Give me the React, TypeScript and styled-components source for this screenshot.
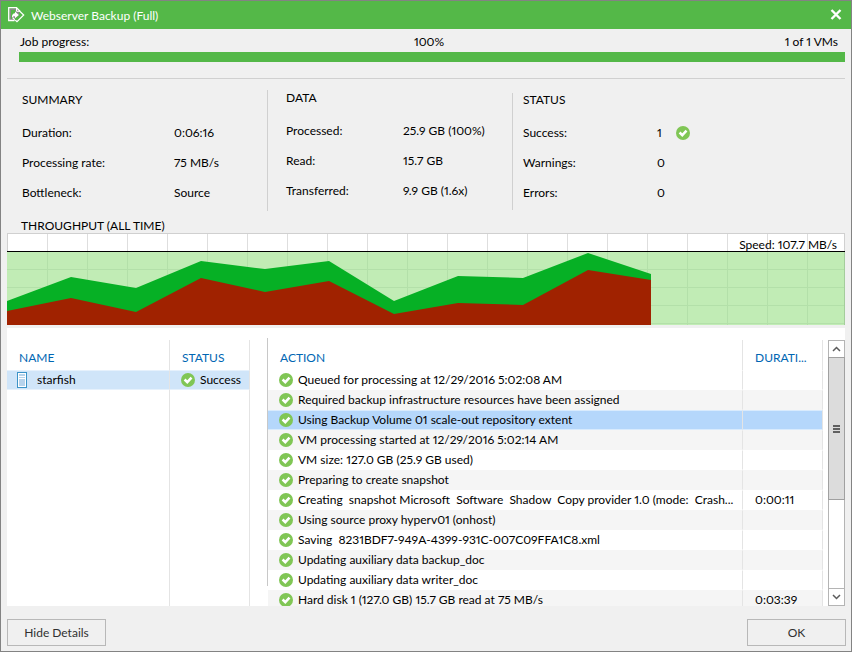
import React from "react";
import styled, { createGlobalStyle } from "styled-components";

const GlobalStyle = createGlobalStyle`
  *, *::before, *::after { box-sizing: border-box; }
  body { margin: 0; background: #f0f0f0; }
  body, button, table {
    font-family: Lato, "Open Sans", sans-serif;
    font-size: 12px;
    font-variant-numeric: proportional-nums;
    color: #000;
  }
  button { padding: 0; margin: 0; }
`;

const Dialog = styled.main`
  display: flex;
  flex-direction: column;
  height: 100vh;
  border: 1px solid #838383;
  background: #f0f0f0;
`;

const TitleBar = styled.header`
  display: flex;
  align-items: center;
  flex: none;
  height: 28px;
  padding: 0 7px 0 7px;
  background: #54b848;
  color: #fff;
`;

const Title = styled.h1`
  flex: 1;
  margin: 0 0 0 6px;
  font-size: 12px;
  font-weight: 400;
`;

const CloseButton = styled.button`
  display: flex;
  align-items: center;
  justify-content: center;
  width: 16px;
  height: 16px;
  border: 0;
  background: none;
`;

const Content = styled.div`
  display: flex;
  flex-direction: column;
  flex: 1;
  min-height: 0;
  padding: 0 6px;
`;

const ProgressLabels = styled.div`
  display: grid;
  grid-template-columns: 1fr auto 1fr;
  padding: 5px 7px 2px 13px;
  line-height: 16px;
`;

const EndLabel = styled.span`
  text-align: right;
`;

const ProgressTrack = styled.div`
  flex: none;
  height: 10px;
  margin-left: 12px;
  background: #d9d9d9;
`;

const ProgressFill = styled.div`
  height: 100%;
  background: #54b848;
`;

const Stats = styled.div`
  display: grid;
  grid-template-columns: 260fr 245fr 333fr;
  align-items: start;
  flex: none;
  margin-top: 16px;
  border-top: 1px solid #d0d0d0;
`;

const StatSection = styled.section<{ $divided?: boolean; $raised?: boolean }>`
  margin-top: ${(p) => (p.$raised ? 11 : 14)}px;
  padding: ${(p) => (p.$raised ? "1px 0 5px 18px" : p.$divided ? "0 0 2px 10px" : "0 0 2px 15px")};
  border-left: ${(p) => (p.$divided ? "1px solid #d0d0d0" : "0")};
`;

const Heading = styled.h2`
  margin: 0;
  font-size: 12px;
  font-weight: 400;
  line-height: 14px;
`;

const StatList = styled.dl`
  margin: 11px 0 0;
`;

const StatRow = styled.div<{ $label: number }>`
  display: grid;
  grid-template-columns: ${(p) => p.$label}px 1fr;
  line-height: 30px;
  dt, dd { margin: 0; }
`;

const StatValue = styled.dd<{ $count?: boolean }>`
  display: flex;
  align-items: center;
  gap: 14px;
  padding-left: ${(p) => (p.$count ? 1 : 0)}px;
`;

const ThroughputTitle = styled(Heading)`
  margin: 8px 0 0 14px;
`;

const ChartFrame = styled.div`
  position: relative;
  flex: none;
  height: 92px;
  svg { display: block; width: 100%; height: 100%; }
`;

const Speed = styled.span`
  position: absolute;
  top: 4px;
  right: 8px;
  line-height: 16px;
`;

const Panel = styled.div`
  display: flex;
  flex: 1;
  min-height: 0;
  margin-top: 3px;
  background: #fff;
`;

const VmPane = styled.div`
  display: flex;
  flex: none;
  width: 243px;
  padding-top: 12px;
`;

const Splitter = styled.div`
  flex: none;
  width: 1px;
  margin: 10px 0 20px 17px;
  background: #c8c8c8;
`;

const ActionPane = styled.div`
  flex: 1;
  min-width: 0;
  padding-top: 12px;
  overflow: hidden;
`;

const Table = styled.table`
  width: 100%;
  table-layout: fixed;
  border-collapse: separate;
  border-spacing: 0;
`;

const VmTable = styled(Table)`
  height: 100%;
`;

const Col = styled.col<{ $w?: number }>`
  width: ${(p) => (p.$w ? p.$w + "px" : "auto")};
`;

const HeadCell = styled.th`
  height: 30px;
  padding: 4px 12px 0;
  border-right: 1px solid #e4e4e4;
  color: #0066b3;
  font-weight: 400;
  text-align: left;
  white-space: nowrap;
  overflow: hidden;
  text-overflow: ellipsis;
`;

type Tone = "plain" | "alt" | "selected" | "current";
const fills: Record<Tone, string> = {
  plain: "#ffffff",
  alt: "#f5f5f5",
  selected: "#b5d7fb",
  current: "#d0e5f9",
};
const edges: Record<Tone, string> = {
  plain: "#ffffff",
  alt: "#f5f5f5",
  selected: "#d9ebfd",
  current: "#e6f1fc",
};

const Row = styled.tr<{ $tone: Tone }>`
  td {
    height: 20px;
    background: ${(p) => fills[p.$tone]};
    border-top: 1px solid ${(p) => edges[p.$tone]};
    border-bottom: 1px solid ${(p) => edges[p.$tone]};
  }
`;

const Cell = styled.td<{ $pad?: number }>`
  padding: 0 0 0 ${(p) => p.$pad ?? 12}px;
  border-right: 1px solid #e4e4e4;
  line-height: 18px;
  white-space: pre;
  overflow: hidden;
`;

const FillerCell = styled.td`
  border-right: 1px solid #e4e4e4;
`;

const IconLabel = styled.span<{ $gap: number }>`
  display: flex;
  align-items: center;
  gap: ${(p) => p.$gap}px;
  svg { flex: none; }
`;

const Scrollbar = styled.div`
  display: flex;
  flex-direction: column;
  flex: none;
  width: 17px;
  margin: 12px 0 0 5px;
  border: 1px solid #b4b4b4;
`;

const ScrollButton = styled.button`
  display: flex;
  align-items: center;
  justify-content: center;
  flex: none;
  height: 16px;
  border: 0;
  background: #fff;
`;

const ScrollTrack = styled.div`
  flex: 1;
  border-bottom: 1px solid #b4b4b4;
`;

const ScrollThumb = styled.div`
  display: flex;
  align-items: center;
  justify-content: center;
  height: 62%;
  margin: 0 -1px;
  border: 1px solid #a0a0a0;
  background: #dcdcdc;
`;

const Footer = styled.footer`
  display: flex;
  justify-content: space-between;
  flex: none;
  padding: 13px 5px 5px 6px;
`;

const DialogButton = styled.button`
  width: 99px;
  height: 27px;
  border: 1px solid #b8b8b8;
  background: #f0f0f0;
  color: #303030;
`;

const SuccessIcon = () => (
  <svg width="14" height="14" viewBox="0 0 14 14" aria-hidden="true">
    <circle cx="7" cy="7" r="7" fill="#80c655" />
    <path d="M3.6 6.5 6.3 9.2 10.5 4.6" fill="none" stroke="#fff" strokeWidth="2.5" />
  </svg>
);

const JobIcon = () => (
  <svg width="17" height="16" viewBox="0 0 17 16" fill="none" aria-hidden="true">
    <path d="M1.5 1.5H8.5L11 4V9L7 13.5H1.5Z" fill="#8a8a8a" />
    <path d="M3 3H7.5V5.5L4 8.5V12H3Z" fill="#54b848" />
    <path d="M6.5 13.5H.7V.7H8.5L12 4.2" stroke="#fff" strokeWidth="1.3" />
    <path d="M8.5 1V4.3H11.8" stroke="#fff" />
    <path d="M11.5 4 15.7 8 9 14.7 4.8 10.8" stroke="#fff" strokeWidth="1.2" />
    <path d="M7 12.5 13 7.8" stroke="#54b848" strokeWidth="1.6" />
    <path d="M4 11C3.6 8 5 6.2 7 6.2V4.5L10.8 8 7 11.3V9.4C5.6 9.2 4.6 9.8 4 11Z" fill="#fff" />
  </svg>
);

const CloseIcon = () => (
  <svg width="12" height="12" viewBox="0 0 12 12" aria-hidden="true">
    <path d="M1.5 1 10.5 10M10.5 1 1.5 10" stroke="#fff" strokeWidth="2.4" />
  </svg>
);

const VmIcon = () => (
  <svg width="10" height="16" viewBox="0 0 10 16" aria-hidden="true">
    <rect x=".5" y=".5" width="9" height="15" fill="#fff" stroke="#3c93c8" />
    <path d="M2 2H8V4H2ZM2 5H8V6H2ZM2 7H8V14H2Z" fill="#b7d3ec" />
  </svg>
);

const Chevron = ({ up }: { up?: boolean }) => (
  <svg width="9" height="6" viewBox="0 0 9 6" fill="none" aria-hidden="true">
    <path d={up ? "M1 5 4.5 1.5 8 5" : "M1 1 4.5 4.5 8 1"} stroke="#5c5c5c" strokeWidth="1.5" />
  </svg>
);

const Grip = () => (
  <svg width="8" height="8" viewBox="0 0 8 8" aria-hidden="true">
    <path d="M0 0H7V2H0ZM0 3H7V5H0ZM0 6H7V8H0Z" fill="#606060" />
  </svg>
);

const gridX = Array.from({ length: 20 }, (_, i) => 40.5 + i * 40);
const readLine = "0,68 64,44 129,55 194,28 258,36 322,28 387,68 451,43 516,45 581,20 644,41";
const writeLine = "0,78 64,65 129,79 194,45 258,59 322,48 387,81 451,70 516,72 581,37 644,47";

const ThroughputChart = () => (
  <svg viewBox="0 0 838 92" preserveAspectRatio="none" role="img" aria-label="Throughput">
    <rect width="838" height="92" fill="#fff" />
    <rect y="18" width="838" height="74" fill="#c1ecb5" />
    <g stroke="#dedede">
      {gridX.map((x) => <path key={x} d={`M${x} 0V18`} />)}
    </g>
    <g stroke="#b3e0a9">
      {gridX.map((x) => <path key={x} d={`M${x} 19V92`} />)}
      {[36.5, 54.5, 72.5, 90.5].map((y) => <path key={y} d={`M0 ${y}H838`} />)}
    </g>
    <polygon points={`${readLine} 644,92 0,92`} fill="#06b025" />
    <polygon points={`${writeLine} 644,92 0,92`} fill="#a02200" />
    <path d="M0 .5H838M.5 0V18M837.5 0V18" stroke="#d0d0d0" fill="none" />
    <path d="M837.5 19V92" stroke="#a5cd9c" />
    <path d="M0 18.5H838" stroke="#000" />
  </svg>
);

const summary = [["Duration:", "0:06:16"], ["Processing rate:", "75 MB/s"], ["Bottleneck:", "Source"]];
const data = [["Processed:", "25.9 GB (100%)"], ["Read:", "15.7 GB"], ["Transferred:", "9.9 GB (1.6x)"]];
const status = [["Success:", "1"], ["Warnings:", "0"], ["Errors:", "0"]];

const actions: { text: string; duration?: string; selected?: boolean }[] = [
  { text: "Queued for processing at 12/29/2016 5:02:08 AM" },
  { text: "Required backup infrastructure resources have been assigned" },
  { text: "Using Backup Volume 01 scale-out repository extent", selected: true },
  { text: "VM processing started at 12/29/2016 5:02:14 AM" },
  { text: "VM size: 127.0 GB (25.9 GB used)" },
  { text: "Preparing to create snapshot" },
  { text: "Creating  snapshot Microsoft  Software  Shadow  Copy provider 1.0 (mode:  Crash...", duration: "0:00:11" },
  { text: "Using source proxy hyperv01 (onhost)" },
  { text: "Saving  8231BDF7-949A-4399-931C-007C09FFA1C8.xml" },
  { text: "Updating auxiliary data backup_doc" },
  { text: "Updating auxiliary data writer_doc" },
  { text: "Hard disk 1 (127.0 GB) 15.7 GB read at 75 MB/s", duration: "0:03:39" },
];

function StatRows({ rows, label, count }: { rows: string[][]; label: number; count?: boolean }) {
  return (
    <StatList>
      {rows.map(([name, value]) => (
        <StatRow key={name} $label={label}>
          <dt>{name}</dt>
          <StatValue $count={count}>
            {value}
            {count && value !== "0" && <SuccessIcon />}
          </StatValue>
        </StatRow>
      ))}
    </StatList>
  );
}

export default function App() {
  return (
    <Dialog>
      <GlobalStyle />
      <TitleBar>
        <JobIcon />
        <Title>Webserver Backup (Full)</Title>
        <CloseButton aria-label="Close"><CloseIcon /></CloseButton>
      </TitleBar>
      <Content>
        <ProgressLabels>
          <span>Job progress:</span>
          <span>100%</span>
          <EndLabel>1 of 1 VMs</EndLabel>
        </ProgressLabels>
        <ProgressTrack role="progressbar" aria-label="Job progress" aria-valuenow={100}>
          <ProgressFill />
        </ProgressTrack>
        <Stats>
          <StatSection>
            <Heading>SUMMARY</Heading>
            <StatRows rows={summary} label={152} />
          </StatSection>
          <StatSection $divided $raised>
            <Heading>DATA</Heading>
            <StatRows rows={data} label={117} />
          </StatSection>
          <StatSection $divided>
            <Heading>STATUS</Heading>
            <StatRows rows={status} label={133} count />
          </StatSection>
        </Stats>
        <ThroughputTitle>THROUGHPUT (ALL TIME)</ThroughputTitle>
        <ChartFrame>
          <ThroughputChart />
          <Speed>Speed: 107.7 MB/s</Speed>
        </ChartFrame>
        <Panel>
          <VmPane>
            <VmTable>
              <colgroup><Col $w={163} /><Col $w={80} /></colgroup>
              <thead>
                <tr><HeadCell scope="col">NAME</HeadCell><HeadCell scope="col">STATUS</HeadCell></tr>
              </thead>
              <tbody>
                <Row $tone="current">
                  <Cell $pad={10}><IconLabel $gap={10}><VmIcon />starfish</IconLabel></Cell>
                  <Cell $pad={11}><IconLabel $gap={5}><SuccessIcon />Success</IconLabel></Cell>
                </Row>
                <tr><FillerCell /><FillerCell /></tr>
              </tbody>
            </VmTable>
          </VmPane>
          <Splitter />
          <ActionPane>
            <Table>
              <colgroup><Col /><Col $w={80} /></colgroup>
              <thead>
                <tr><HeadCell scope="col">ACTION</HeadCell><HeadCell scope="col">DURATI...</HeadCell></tr>
              </thead>
              <tbody>
                {actions.map((a, i) => (
                  <Row key={a.text} $tone={a.selected ? "selected" : i % 2 ? "alt" : "plain"}>
                    <Cell $pad={11}><IconLabel $gap={5}><SuccessIcon />{a.text}</IconLabel></Cell>
                    <Cell>{a.duration}</Cell>
                  </Row>
                ))}
              </tbody>
            </Table>
          </ActionPane>
          <Scrollbar>
            <ScrollButton aria-label="Scroll up"><Chevron up /></ScrollButton>
            <ScrollTrack><ScrollThumb><Grip /></ScrollThumb></ScrollTrack>
            <ScrollButton aria-label="Scroll down"><Chevron /></ScrollButton>
          </Scrollbar>
        </Panel>
      </Content>
      <Footer>
        <DialogButton>Hide Details</DialogButton>
        <DialogButton>OK</DialogButton>
      </Footer>
    </Dialog>
  );
}
